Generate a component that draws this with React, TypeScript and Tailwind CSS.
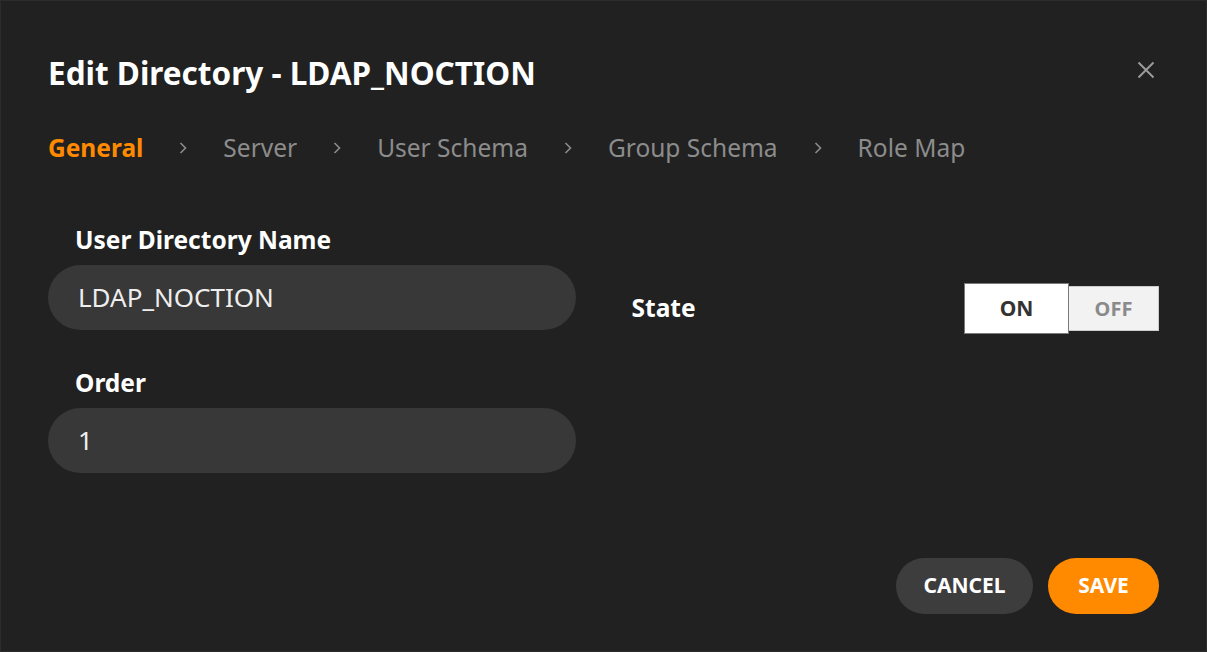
import React from 'react';

const font = { fontFamily: '"Noto Sans", "Open Sans", sans-serif' };

const tabs = ['General', 'Server', 'User Schema', 'Group Schema', 'Role Map'];

const Chevron = () => (
  <svg width="10" height="16" viewBox="0 0 10 16" className="mx-[35px]">
    <path d="M2.5 3 L7.5 8 L2.5 13" fill="none" stroke="#8c8c8c" strokeWidth="1.6" />
  </svg>
);

const Field = ({ label, value }: { label: string; value: string }) => (
  <div className="flex flex-col">
    <label className="pl-[27px] text-[24.5px] font-bold leading-[32px] text-white">{label}</label>
    <div className="mt-[9px] flex h-[65px] items-center rounded-full bg-[#383838] px-[30px] text-[26px] text-[#eeeeee]">
      {value}
    </div>
  </div>
);

const App = () => {
  return (
    <div style={font} className="flex h-screen w-full flex-col border border-[#2c2c2c] bg-[#212121] px-[47px]">
      {/* header */}
      <div className="flex items-center justify-between pt-[51px]">
        <h1 className="text-[31.5px] font-bold leading-[42px] text-white">Edit Directory - LDAP_NOCTION</h1>
        <button className="mr-[4px] mb-[6px] text-[#9a9a9a]">
          <svg width="18" height="18" viewBox="0 0 18 18">
            <path d="M1.5 1.5 L16.5 16.5 M16.5 1.5 L1.5 16.5" stroke="currentColor" strokeWidth="2" />
          </svg>
        </button>
      </div>

      {/* steps */}
      <div className="mt-[38px] flex items-center text-[24.5px] leading-[32px]">
        {tabs.map((t, i) => (
          <React.Fragment key={t}>
            {i > 0 && <Chevron />}
            <span className={i === 0 ? 'font-bold text-[#ff8a00]' : 'text-[#8c8c8c]'}>{t}</span>
          </React.Fragment>
        ))}
      </div>

      {/* form */}
      <div className="mt-[60px] grid grid-cols-2 gap-x-[56px]">
        <div className="flex flex-col gap-[37px]">
          <Field label="User Directory Name" value="LDAP_NOCTION" />
          <Field label="Order" value="1" />
        </div>
        <div className="flex items-start justify-between pt-[59px]">
          <span className="mt-[9px] text-[24.5px] font-bold leading-[32px] text-white">State</span>
          <div className="flex items-center">
            <div className="flex h-[51px] w-[105px] items-center justify-center border border-[#7a7a7a] bg-white text-[21px] font-bold text-[#333333]">
              ON
            </div>
            <div className="flex h-[45px] w-[90px] items-center justify-center border border-l-0 border-[#cccccc] bg-[#f2f2f2] text-[20px] font-bold text-[#8a8a8a]">
              OFF
            </div>
          </div>
        </div>
      </div>

      {/* actions */}
      <div className="mt-auto mb-[37px] flex justify-end gap-[15px]">
        <button className="h-[56px] w-[137px] rounded-full bg-[#3d3d3d] text-[21px] font-bold text-white">CANCEL</button>
        <button className="h-[56px] w-[111px] rounded-full bg-[#ff8a00] text-[21px] font-bold text-white">SAVE</button>
      </div>
    </div>
  );
};

export default App;
